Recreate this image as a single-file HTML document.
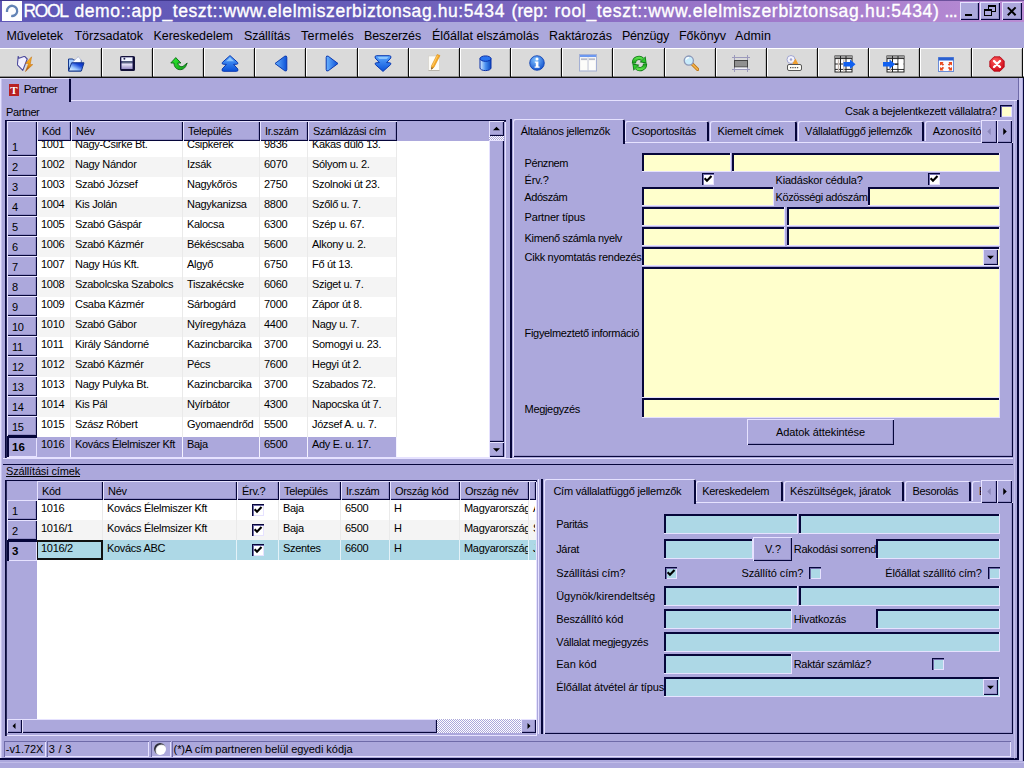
<!DOCTYPE html>
<html><head><meta charset="utf-8"><title>ROOL demo</title>
<style>
html,body{margin:0;padding:0;}
body{width:1024px;height:768px;overflow:hidden;position:relative;background:#aca8dc;font-family:"Liberation Sans",sans-serif;font-size:11px;}
body div,body svg{position:absolute;box-sizing:border-box;}
.t{font-family:"Liberation Sans",sans-serif;}
</style></head>
<body>
<div style="left:0px;top:0px;width:1024px;height:22px;background:linear-gradient(to right,#6058b8 0%,#665cb8 36%,#9874c8 68%,#ba8cd4 100%);"></div>
<div style="left:0px;top:0px;width:1024px;height:1px;background:rgba(24,16,90,.45);"></div>
<div style="left:2px;top:1px;width:20px;height:20px;background:#fdfeff;"><svg width="20" height="20" viewBox="0 0 20 20"><path d="M5 11 V9.6 A5.1 5.1 0 1 1 9.2 14.9" stroke="#6284b6" stroke-width="2.3" fill="none"/></svg></div>
<div class="t" style="top:-0.36px;font-size:17.5px;line-height:23px;letter-spacing:-1.402px;color:#fff;white-space:pre;left:23.5px;-webkit-text-stroke:0.35px #fff;">ROOL</div>
<div class="t" style="top:-0.36px;font-size:17.5px;line-height:23px;letter-spacing:0.578px;color:#fff;white-space:pre;left:74.5px;-webkit-text-stroke:0.35px #fff;">demo::app_teszt::www.elelmiszerbiztonsag.hu:5434</div>
<div class="t" style="top:-0.36px;font-size:17.5px;line-height:23px;letter-spacing:0.103px;color:#fff;white-space:pre;left:511.5px;-webkit-text-stroke:0.35px #fff;">(rep:</div>
<div class="t" style="top:-0.36px;font-size:17.5px;line-height:23px;letter-spacing:0.681px;color:#fff;white-space:pre;left:554.5px;-webkit-text-stroke:0.35px #fff;">rool_teszt::www.elelmiszerbiztonsag.hu:5434)</div>
<div class="t" style="top:-0.36px;font-size:17.5px;line-height:23px;letter-spacing:-0.698px;color:#fff;white-space:pre;left:944.5px;-webkit-text-stroke:0.35px #fff;">...</div>
<div style="left:960px;top:2px;width:19px;height:18px;background:#aca8dc;box-shadow:inset 1px 1px 0 #e6e2ff,inset -1px -1px 0 #06063a,inset -2px -2px 0 #6e6aa866;"></div>
<div style="left:980px;top:2px;width:20px;height:18px;background:#aca8dc;box-shadow:inset 1px 1px 0 #e6e2ff,inset -1px -1px 0 #06063a,inset -2px -2px 0 #6e6aa866;"></div>
<div style="left:1002px;top:2px;width:20px;height:18px;background:#aca8dc;box-shadow:inset 1px 1px 0 #e6e2ff,inset -1px -1px 0 #06063a,inset -2px -2px 0 #6e6aa866;"></div>
<div style="left:965px;top:14px;width:7px;height:2px;background:#000;"></div>
<div style="left:988px;top:5px;width:8px;height:7px;border:1px solid #000;border-top-width:2px;"></div>
<div style="left:984px;top:9px;width:8px;height:7px;border:1px solid #000;border-top-width:2px;background:#aca8dc;"></div>
<svg class="ov" style="left:1006px;top:5px" width="12" height="12"><path d="M1.8 2.4 L9.6 10.2 M9.6 2.4 L1.8 10.2" stroke="#000" stroke-width="2"/></svg>
<div class="t" style="top:27.97px;font-size:12.5px;line-height:16px;letter-spacing:-0.054px;color:#000;white-space:pre;left:6.5px;">Műveletek</div>
<div class="t" style="top:27.97px;font-size:12.5px;line-height:16px;letter-spacing:-0.026px;color:#000;white-space:pre;left:74.5px;">Törzsadatok</div>
<div class="t" style="top:27.97px;font-size:12.5px;line-height:16px;letter-spacing:-0.034px;color:#000;white-space:pre;left:153.5px;">Kereskedelem</div>
<div class="t" style="top:27.97px;font-size:12.5px;line-height:16px;letter-spacing:-0.139px;color:#000;white-space:pre;left:244px;">Szállítás</div>
<div class="t" style="top:27.97px;font-size:12.5px;line-height:16px;letter-spacing:0.285px;color:#000;white-space:pre;left:301px;">Termelés</div>
<div class="t" style="top:27.97px;font-size:12.5px;line-height:16px;letter-spacing:-0.151px;color:#000;white-space:pre;left:364px;">Beszerzés</div>
<div class="t" style="top:27.97px;font-size:12.5px;line-height:16px;letter-spacing:0.000px;color:#000;white-space:pre;left:432px;">Élőállat elszámolás</div>
<div class="t" style="top:27.97px;font-size:12.5px;line-height:16px;letter-spacing:-0.023px;color:#000;white-space:pre;left:549px;">Raktározás</div>
<div class="t" style="top:27.97px;font-size:12.5px;line-height:16px;letter-spacing:-0.237px;color:#000;white-space:pre;left:622px;">Pénzügy</div>
<div class="t" style="top:27.97px;font-size:12.5px;line-height:16px;letter-spacing:-0.036px;color:#000;white-space:pre;left:679px;">Főkönyv</div>
<div class="t" style="top:27.97px;font-size:12.5px;line-height:16px;letter-spacing:0.113px;color:#000;white-space:pre;left:735px;">Admin</div>
<div style="left:0px;top:48px;width:1024px;height:30px;background:#dadada;"></div>
<div style="left:0px;top:48px;width:1024px;height:1px;background:#fff;"></div>
<div style="left:0px;top:77px;width:1024px;height:1px;background:#101010;"></div>
<div style="left:0px;top:76px;width:1024px;height:1px;background:#8c8c8c;"></div>
<div style="left:50px;top:48px;width:1px;height:29px;background:#0c0c0c;"></div>
<div style="left:49px;top:49px;width:1px;height:27px;background:#9a9a9a;opacity:.5;"></div>
<div style="left:51px;top:49px;width:1px;height:27px;background:#fff;"></div>
<div style="left:101px;top:48px;width:1px;height:29px;background:#0c0c0c;"></div>
<div style="left:100px;top:49px;width:1px;height:27px;background:#9a9a9a;opacity:.5;"></div>
<div style="left:102px;top:49px;width:1px;height:27px;background:#fff;"></div>
<div style="left:152px;top:48px;width:1px;height:29px;background:#0c0c0c;"></div>
<div style="left:151px;top:49px;width:1px;height:27px;background:#9a9a9a;opacity:.5;"></div>
<div style="left:153px;top:49px;width:1px;height:27px;background:#fff;"></div>
<div style="left:203px;top:48px;width:1px;height:29px;background:#0c0c0c;"></div>
<div style="left:202px;top:49px;width:1px;height:27px;background:#9a9a9a;opacity:.5;"></div>
<div style="left:204px;top:49px;width:1px;height:27px;background:#fff;"></div>
<div style="left:254px;top:48px;width:1px;height:29px;background:#0c0c0c;"></div>
<div style="left:253px;top:49px;width:1px;height:27px;background:#9a9a9a;opacity:.5;"></div>
<div style="left:255px;top:49px;width:1px;height:27px;background:#fff;"></div>
<div style="left:305px;top:48px;width:1px;height:29px;background:#0c0c0c;"></div>
<div style="left:304px;top:49px;width:1px;height:27px;background:#9a9a9a;opacity:.5;"></div>
<div style="left:306px;top:49px;width:1px;height:27px;background:#fff;"></div>
<div style="left:357px;top:48px;width:1px;height:29px;background:#0c0c0c;"></div>
<div style="left:356px;top:49px;width:1px;height:27px;background:#9a9a9a;opacity:.5;"></div>
<div style="left:358px;top:49px;width:1px;height:27px;background:#fff;"></div>
<div style="left:408px;top:48px;width:1px;height:29px;background:#0c0c0c;"></div>
<div style="left:407px;top:49px;width:1px;height:27px;background:#9a9a9a;opacity:.5;"></div>
<div style="left:409px;top:49px;width:1px;height:27px;background:#fff;"></div>
<div style="left:459px;top:48px;width:1px;height:29px;background:#0c0c0c;"></div>
<div style="left:458px;top:49px;width:1px;height:27px;background:#9a9a9a;opacity:.5;"></div>
<div style="left:460px;top:49px;width:1px;height:27px;background:#fff;"></div>
<div style="left:510px;top:48px;width:1px;height:29px;background:#0c0c0c;"></div>
<div style="left:509px;top:49px;width:1px;height:27px;background:#9a9a9a;opacity:.5;"></div>
<div style="left:511px;top:49px;width:1px;height:27px;background:#fff;"></div>
<div style="left:561px;top:48px;width:1px;height:29px;background:#0c0c0c;"></div>
<div style="left:560px;top:49px;width:1px;height:27px;background:#9a9a9a;opacity:.5;"></div>
<div style="left:562px;top:49px;width:1px;height:27px;background:#fff;"></div>
<div style="left:612px;top:48px;width:1px;height:29px;background:#0c0c0c;"></div>
<div style="left:611px;top:49px;width:1px;height:27px;background:#9a9a9a;opacity:.5;"></div>
<div style="left:613px;top:49px;width:1px;height:27px;background:#fff;"></div>
<div style="left:664px;top:48px;width:1px;height:29px;background:#0c0c0c;"></div>
<div style="left:663px;top:49px;width:1px;height:27px;background:#9a9a9a;opacity:.5;"></div>
<div style="left:665px;top:49px;width:1px;height:27px;background:#fff;"></div>
<div style="left:715px;top:48px;width:1px;height:29px;background:#0c0c0c;"></div>
<div style="left:714px;top:49px;width:1px;height:27px;background:#9a9a9a;opacity:.5;"></div>
<div style="left:716px;top:49px;width:1px;height:27px;background:#fff;"></div>
<div style="left:766px;top:48px;width:1px;height:29px;background:#0c0c0c;"></div>
<div style="left:765px;top:49px;width:1px;height:27px;background:#9a9a9a;opacity:.5;"></div>
<div style="left:767px;top:49px;width:1px;height:27px;background:#fff;"></div>
<div style="left:817px;top:48px;width:1px;height:29px;background:#0c0c0c;"></div>
<div style="left:816px;top:49px;width:1px;height:27px;background:#9a9a9a;opacity:.5;"></div>
<div style="left:818px;top:49px;width:1px;height:27px;background:#fff;"></div>
<div style="left:868px;top:48px;width:1px;height:29px;background:#0c0c0c;"></div>
<div style="left:867px;top:49px;width:1px;height:27px;background:#9a9a9a;opacity:.5;"></div>
<div style="left:869px;top:49px;width:1px;height:27px;background:#fff;"></div>
<div style="left:919px;top:48px;width:1px;height:29px;background:#0c0c0c;"></div>
<div style="left:918px;top:49px;width:1px;height:27px;background:#9a9a9a;opacity:.5;"></div>
<div style="left:920px;top:49px;width:1px;height:27px;background:#fff;"></div>
<div style="left:971px;top:48px;width:1px;height:29px;background:#0c0c0c;"></div>
<div style="left:970px;top:49px;width:1px;height:27px;background:#9a9a9a;opacity:.5;"></div>
<div style="left:972px;top:49px;width:1px;height:27px;background:#fff;"></div>
<div style="left:1022px;top:48px;width:1px;height:29px;background:#0c0c0c;"></div>
<div style="left:1021px;top:49px;width:1px;height:27px;background:#9a9a9a;opacity:.5;"></div>
<div style="left:1023px;top:49px;width:1px;height:27px;background:#fff;"></div>
<svg width="0" height="0" style="left:0;top:0"><defs>
<linearGradient id="gb" x1="0" y1="0" x2="0" y2="1"><stop offset="0" stop-color="#5aa8ff"/><stop offset="1" stop-color="#0a50d8"/></linearGradient>
<linearGradient id="gbh" x1="0" y1="0" x2="1" y2="0"><stop offset="0" stop-color="#6ab4ff"/><stop offset="1" stop-color="#0a50d8"/></linearGradient>
<linearGradient id="gg" x1="0" y1="0" x2="0" y2="1"><stop offset="0" stop-color="#58e048"/><stop offset="1" stop-color="#109018"/></linearGradient>
<linearGradient id="gf" x1="0" y1="0" x2="0" y2="1"><stop offset="0" stop-color="#5a5890"/><stop offset="1" stop-color="#c8c4e8"/></linearGradient>
<radialGradient id="gi" cx="0.4" cy="0.3" r="0.8"><stop offset="0" stop-color="#7ec0ff"/><stop offset="1" stop-color="#0848c8"/></radialGradient>
<radialGradient id="gr" cx="0.4" cy="0.3" r="0.8"><stop offset="0" stop-color="#ff5a5a"/><stop offset="1" stop-color="#c80010"/></radialGradient>
<linearGradient id="gc" x1="0" y1="0" x2="1" y2="0"><stop offset="0" stop-color="#d8ecff"/><stop offset="0.5" stop-color="#4a90f0"/><stop offset="1" stop-color="#0a48c0"/></linearGradient>
</defs></svg>
<svg style="left:17.2px;top:55.5px" width="17" height="16" viewBox="0 0 17 16"><defs><linearGradient id="gbolt" x1="0" y1="0" x2="0" y2="1"><stop offset="0" stop-color="#f8b424"/><stop offset=".55" stop-color="#f09a14"/><stop offset="1" stop-color="#8a3810"/></linearGradient></defs><path d="M1.2 .4 L2 2.2 L7.6 .3 L10.2 3 L5.8 14.4 L.4 8.8 Z" fill="#f2f0ff" stroke="#4c4a9c" stroke-width="1.1" stroke-linejoin="round"/><path d="M14.6 .8 L8.4 7.4 L11.6 7.4 L8.4 15.6 L15.8 8.6 L13.2 8.4 Z" fill="url(#gbolt)" stroke="#c06a10" stroke-width=".5"/></svg>
<svg style="left:67.9px;top:55.5px" width="17" height="16" viewBox="0 0 17 16"><defs><linearGradient id="gfold" x1="0" y1="1" x2="1" y2="0"><stop offset="0" stop-color="#f4fcff"/><stop offset=".35" stop-color="#9cc8ff"/><stop offset=".7" stop-color="#1848d8"/><stop offset="1" stop-color="#0828b0"/></linearGradient></defs><path d="M.5 3 H4.8 L5.8 4.2 H13 V15 H.5 Z" fill="#a4ccff" stroke="#16388c" stroke-width="1"/><path d="M4.2 6.5 L10.2 .8 L13.2 4 L12.6 6.8 Z" fill="#fafcff" stroke="#6a78b8" stroke-width=".6" stroke-dasharray="1 .6"/><path d="M.6 15 L3.6 6.8 H16 L13.4 15 Z" fill="url(#gfold)" stroke="#16388c" stroke-width="1" stroke-linejoin="round"/></svg>
<svg style="left:120.0px;top:56.0px" width="15" height="15" viewBox="0 0 15 15"><defs><linearGradient id="glab" x1="0" y1="0" x2="0" y2="1"><stop offset="0" stop-color="#f4f2ff"/><stop offset="1" stop-color="#968cc4"/></linearGradient></defs><rect x=".5" y=".5" width="14" height="14" rx=".8" fill="#3a3870" stroke="#14123c" stroke-width="1"/><rect x="13" y="1" width="1.6" height="13.4" fill="#100e34"/><rect x="1" y="13" width="13" height="1.6" fill="#100e34"/><rect x="1.4" y="1.4" width="11" height="3.6" fill="#f2f6ff"/><circle cx="4.4" cy="2.8" r="1" fill="#2a2858"/><rect x="2.2" y="5.4" width="10" height="1.6" fill="#5c6a84"/><rect x="1.6" y="7.4" width="10.8" height="5.6" fill="url(#glab)"/></svg>
<svg style="left:170.4px;top:55.5px" width="18" height="16" viewBox="0 0 18 16"><defs><linearGradient id="gund" x1="0" y1="0" x2="1" y2="1"><stop offset="0" stop-color="#30f030"/><stop offset="1" stop-color="#10a018"/></linearGradient></defs><path d="M5.75 1.6 L10.9 7 L7.8 7 C8 9.4 10.4 11.3 13 10.4 L17.2 7 L15.6 10.6 C13.4 14.4 8 14.6 5.5 11.6 C4.3 10.1 4 8.6 4 7 L.8 7 Z" fill="url(#gund)" stroke="#086414" stroke-width=".9" stroke-linejoin="round"/></svg>
<svg style="left:220.8px;top:54.5px" width="18" height="17" viewBox="0 0 18 17"><path d="M9 .6 L16.6 7.4 Q17.6 9 15.8 9.2 L12.6 9.4 L16.8 14 Q17.6 16.3 15.4 16.3 H2.6 Q.4 16.3 1.2 14 L5.4 9.4 L2.2 9.2 Q.4 9 1.4 7.4 Z" fill="url(#gb)" stroke="#0a38b0" stroke-width="1" stroke-linejoin="round"/><path d="M9 2.4 L13 6.2 H5 Z" fill="#b4e0ff" opacity=".65"/></svg>
<svg style="left:274.0px;top:55.0px" width="14" height="17" viewBox="0 0 14 17"><path d="M1 8.5 L10.8 1.2 Q12.8 .4 12.8 2.4 V14.6 Q12.8 16.6 10.8 15.8 Z" fill="url(#gbh)" stroke="#0a38b0" stroke-width="1" stroke-linejoin="round"/></svg>
<svg style="left:325.2px;top:55.0px" width="14" height="17" viewBox="0 0 14 17"><path d="M13 8.5 L3.2 1.2 Q1.2 .4 1.2 2.4 V14.6 Q1.2 16.6 3.2 15.8 Z" fill="url(#gbh)" stroke="#0a38b0" stroke-width="1" stroke-linejoin="round"/></svg>
<svg style="left:374.3px;top:55.0px" width="18" height="17" viewBox="0 0 18 17"><path d="M9 16.4 L1.4 9.6 Q.4 8 2.2 7.8 L5.4 7.6 L1.2 3 Q.4 .7 2.6 .7 H15.4 Q17.6 .7 16.8 3 L12.6 7.6 L15.8 7.8 Q17.6 8 16.6 9.6 Z" fill="url(#gb)" stroke="#0a38b0" stroke-width="1" stroke-linejoin="round"/><path d="M3.4 1.8 H14.6 L12.8 4 H5.2 Z" fill="#b4e0ff" opacity=".6"/></svg>
<svg style="left:428.0px;top:53.9px" width="13" height="17" viewBox="0 0 13 17"><path d="M.5 2 H11.5 V16.5 H.5 Z" fill="#fdfcf8" stroke="#d0ccc4" stroke-width=".6"/><path d="M.5 16.5 H11.5" stroke="#b8b4ac" stroke-width="1"/><path d="M9.2 .4 L12 1.6 L6 13.2 L3.4 15.4 L3.4 12 Z" fill="#f6a824" stroke="#d48810" stroke-width=".5"/><path d="M9.6 1.6 L4.4 12.2" stroke="#ffd070" stroke-width=".9"/><path d="M3.4 15.4 L3.45 13.2 L5 14 Z" fill="#5a4a38"/></svg>
<svg style="left:479.1px;top:54.8px" width="13" height="17" viewBox="0 0 13 17"><path d="M1 3.5 V13 A5.5 2.6 0 0 0 12 13 V3.5 Z" fill="url(#gc)" stroke="#0a30a8" stroke-width="1"/><ellipse cx="6.5" cy="3.6" rx="5.5" ry="2.7" fill="#2a74f0" stroke="#0a30a8" stroke-width="1"/></svg>
<svg style="left:528.8px;top:54.8px" width="16" height="16" viewBox="0 0 16 16"><circle cx="8" cy="8" r="7.3" fill="url(#gi)" stroke="#0a3cb0" stroke-width=".8"/><circle cx="8" cy="4" r="1.5" fill="#fff"/><path d="M5.8 6.4 H9.4 V11.4 H10.6 V12.8 H5.6 V11.4 H6.8 V7.8 H5.8 Z" fill="#fff"/></svg>
<svg style="left:579.0px;top:53.7px" width="18" height="18" viewBox="0 0 18 18"><rect x=".5" y=".5" width="17" height="16.5" fill="#f4f4f4" stroke="#a4b0d4" stroke-width="1"/><rect x="1" y="1" width="16" height="2" fill="#6c98f0"/><rect x="2" y="4.4" width="6" height="1.5" fill="#b0b4c4"/><rect x="10" y="4.4" width="6" height="1.5" fill="#b0b4c4"/><rect x="8.6" y="3.4" width=".9" height="13.4" fill="#c4c8d8"/><rect x="2" y="7" width="6" height="9" fill="#fcfcfa"/><rect x="10" y="7" width="6" height="9" fill="#fcfcfa"/></svg>
<svg style="left:630.6px;top:54.5px" width="17" height="17" viewBox="0 0 17 17"><g><path d="M3 8.4 A5 5 0 0 1 11.4 4.3" stroke="#0a7412" stroke-width="4.2" fill="none"/><polygon points="14.6,1.2 8.6,7.2 15.6,8.6" fill="#0a7412"/><path d="M3 8.4 A5 5 0 0 1 11.4 4.3" stroke="url(#gg)" stroke-width="2.8" fill="none"/><polygon points="14,2.6 10.2,6.6 14.8,7.6" fill="#30c830"/></g><g transform="rotate(180 8.5 8.5)"><path d="M3 8.4 A5 5 0 0 1 11.4 4.3" stroke="#0a7412" stroke-width="4.2" fill="none"/><polygon points="14.6,1.2 8.6,7.2 15.6,8.6" fill="#0a7412"/><path d="M3 8.4 A5 5 0 0 1 11.4 4.3" stroke="url(#gg)" stroke-width="2.8" fill="none"/><polygon points="14,2.6 10.2,6.6 14.8,7.6" fill="#30c830"/></g></svg>
<svg style="left:683.3px;top:54.7px" width="16" height="16" viewBox="0 0 16 16"><path d="M8.8 8.6 L14.6 14.4" stroke="#c07818" stroke-width="3.4" stroke-linecap="round"/><path d="M9.4 9.2 L14.4 14.2" stroke="#f6b64a" stroke-width="1.6" stroke-linecap="round"/><circle cx="5.8" cy="5.6" r="4.6" fill="#c8ecfc" stroke="#8c98b8" stroke-width="1.3"/><path d="M3 4.6 A3 3 0 0 1 6 2.6" stroke="#fff" stroke-width="1.2" fill="none"/></svg>
<svg style="left:732.4px;top:55.0px" width="18" height="17" viewBox="0 0 18 17"><path d="M2.5 0 V17 M15.5 0 V17 M0 2.5 H18 M0 14.5 H18" stroke="#9c9abc" stroke-width="1"/><rect x="2.5" y="5.5" width="13" height="6.5" fill="#909090" stroke="#444" stroke-width="1"/><rect x="3" y="12.5" width="12" height="1.5" fill="#f0f0f8"/></svg>
<svg style="left:784.6px;top:55.0px" width="18" height="17" viewBox="0 0 18 17"><circle cx="6" cy="4.5" r="4" fill="#f4f4fc" stroke="#a0a4d0" stroke-width="1"/><circle cx="6" cy="4.5" r="1.2" fill="#a0a4d0"/><path d="M7 9.5 L10.5 3.5 L13.5 9.5 Z" fill="#f0a030"/><rect x="2.5" y="9.5" width="14" height="6" rx="1.5" fill="#fdfdf8" stroke="#555" stroke-width="1"/><path d="M5 12.6 H14" stroke="#555" stroke-width="1.4" stroke-dasharray="1.3 1"/></svg>
<svg style="left:833.8px;top:54.5px" width="22" height="18" viewBox="0 0 22 18"><rect x="1" y="1" width="17" height="16" fill="#fff" stroke="#222" stroke-width="1"/><rect x="1" y="1" width="17" height="2" fill="#999"/><path d="M1 3.6 H18 M1 9 H18 M1 14.4 H18" stroke="#222" stroke-width="1"/><path d="M6.5 1 V17 M12 1 V17" stroke="#222" stroke-width="1"/><path d="M4.5 4.5 V16.5 M9.8 4.5 V16.5" stroke="#c8bcb4" stroke-width="1.4"/><path d="M9.5 7 H16 V4.5 L21.5 9.3 L16 14 V11.5 H9.5 Z" fill="#1060f0"/></svg>
<svg style="left:882.9px;top:54.5px" width="22" height="18" viewBox="0 0 22 18"><g transform="translate(3,0)"><rect x="1" y="1" width="17" height="16" fill="#fff" stroke="#222" stroke-width="1"/><rect x="1" y="1" width="17" height="2" fill="#999"/><path d="M1 3.6 H18 M1 9 H18 M1 14.4 H18" stroke="#222" stroke-width="1"/><path d="M6.5 1 V17 M12 1 V17" stroke="#222" stroke-width="1"/><path d="M4.5 4.5 V16.5" stroke="#c8bcb4" stroke-width="1.4"/><rect x="12.6" y="4.4" width="4.8" height="9.4" fill="#fff"/></g><path d="M0 7 H6.5 V4.5 L12 9.3 L6.5 14 V11.5 H0 Z" fill="#1060f0"/><path d="M12 9.3 H15" stroke="#222" stroke-width="1.2"/></svg>
<svg style="left:938.1px;top:56.5px" width="16" height="15" viewBox="0 0 16 15"><rect x=".5" y=".5" width="15" height="14" fill="#fbfbff" stroke="#6a8cd8" stroke-width="1"/><rect x=".5" y=".5" width="15" height="3" fill="#2a60d0"/><path d="M2 5 H5.5 L4.6 6.2 L6.2 7.6 L4.8 8.8 L3.4 7.4 L2 8.4 Z" fill="#e84a20"/><path d="M14 5 H10.5 L11.4 6.2 L9.8 7.6 L11.2 8.8 L12.6 7.4 L14 8.4 Z" fill="#e84a20"/><path d="M2 13.5 H5.5 L4.6 12.3 L6.2 10.9 L4.8 9.7 L3.4 11.1 L2 10.1 Z" fill="#e84a20"/><path d="M14 13.5 H10.5 L11.4 12.3 L9.8 10.9 L11.2 9.7 L12.6 11.1 L14 10.1 Z" fill="#e84a20"/></svg>
<svg style="left:989.2px;top:55.5px" width="16" height="16" viewBox="0 0 16 16"><path d="M5 .8 H11 L15.2 5 V11 L11 15.2 H5 L.8 11 V5 Z" fill="url(#gr)" stroke="#b00010" stroke-width=".8"/><path d="M5 5 L11 11 M11 5 L5 11" stroke="#fff" stroke-width="2.4" stroke-linecap="round"/></svg>
<div style="left:0px;top:78px;width:1px;height:680px;background:#e6e2ff;"></div>
<div style="left:1px;top:78px;width:1px;height:680px;background:#e6e2ff;opacity:.45;"></div>
<div style="left:70px;top:100px;width:947px;height:1px;background:#e6e2ff;"></div>
<div style="left:69px;top:79px;width:2px;height:23px;background:#06063a;"></div>
<div style="left:0px;top:78px;width:69px;height:1px;background:#e6e2ff;"></div>
<div style="left:9px;top:83.5px;width:9.5px;height:12px;background:#b82222;"></div>
<div class="t" style="top:82.79px;font-size:11px;line-height:14px;letter-spacing:0.000px;color:#fff;white-space:pre;font-weight:bold;left:10.2px;font-family:'Liberation Serif',serif;">T</div>
<div class="t" style="top:81.52px;font-size:11.5px;line-height:15px;letter-spacing:-0.603px;color:#000;white-space:pre;left:23.75px;">Partner</div>
<div class="t" style="top:105.19px;font-size:11px;line-height:14px;letter-spacing:-0.383px;color:#000;white-space:pre;left:6px;">Partner</div>
<div style="left:5px;top:120px;width:501px;height:338px;background:#aca8dc;box-shadow:inset 1px 1px 0 #06063a,inset 2px 2px 0 #06063acc,inset -1px -1px 0 #e6e2ff;"></div>
<div style="left:37px;top:141px;width:452px;height:316px;background:#fff;"></div>
<div class="t" style="top:137.19px;font-size:11px;line-height:14px;letter-spacing:-0.300px;color:#000;white-space:pre;left:41px;">1001</div>
<div class="t" style="top:137.19px;font-size:11px;line-height:14px;letter-spacing:-0.300px;color:#000;white-space:pre;left:75px;">Nagy-Csirke Bt.</div>
<div class="t" style="top:137.19px;font-size:11px;line-height:14px;letter-spacing:-0.300px;color:#000;white-space:pre;left:187px;">Csipkerek</div>
<div class="t" style="top:137.19px;font-size:11px;line-height:14px;letter-spacing:-0.300px;color:#000;white-space:pre;left:264px;">9836</div>
<div class="t" style="top:137.19px;font-size:11px;line-height:14px;letter-spacing:-0.300px;color:#000;white-space:pre;left:312px;">Kakas dűlő 13.</div>
<div style="left:37px;top:157px;width:360px;height:20px;background:#f4f4f4;"></div>
<div class="t" style="top:157.19px;font-size:11px;line-height:14px;letter-spacing:-0.300px;color:#000;white-space:pre;left:41px;">1002</div>
<div class="t" style="top:157.19px;font-size:11px;line-height:14px;letter-spacing:-0.300px;color:#000;white-space:pre;left:75px;">Nagy Nándor</div>
<div class="t" style="top:157.19px;font-size:11px;line-height:14px;letter-spacing:-0.300px;color:#000;white-space:pre;left:187px;">Izsák</div>
<div class="t" style="top:157.19px;font-size:11px;line-height:14px;letter-spacing:-0.300px;color:#000;white-space:pre;left:264px;">6070</div>
<div class="t" style="top:157.19px;font-size:11px;line-height:14px;letter-spacing:-0.300px;color:#000;white-space:pre;left:312px;">Sólyom u. 2.</div>
<div class="t" style="top:177.19px;font-size:11px;line-height:14px;letter-spacing:-0.300px;color:#000;white-space:pre;left:41px;">1003</div>
<div class="t" style="top:177.19px;font-size:11px;line-height:14px;letter-spacing:-0.300px;color:#000;white-space:pre;left:75px;">Szabó József</div>
<div class="t" style="top:177.19px;font-size:11px;line-height:14px;letter-spacing:-0.300px;color:#000;white-space:pre;left:187px;">Nagykőrös</div>
<div class="t" style="top:177.19px;font-size:11px;line-height:14px;letter-spacing:-0.300px;color:#000;white-space:pre;left:264px;">2750</div>
<div class="t" style="top:177.19px;font-size:11px;line-height:14px;letter-spacing:-0.300px;color:#000;white-space:pre;left:312px;">Szolnoki út 23.</div>
<div style="left:37px;top:197px;width:360px;height:20px;background:#f4f4f4;"></div>
<div class="t" style="top:197.19px;font-size:11px;line-height:14px;letter-spacing:-0.300px;color:#000;white-space:pre;left:41px;">1004</div>
<div class="t" style="top:197.19px;font-size:11px;line-height:14px;letter-spacing:-0.300px;color:#000;white-space:pre;left:75px;">Kis Jolán</div>
<div class="t" style="top:197.19px;font-size:11px;line-height:14px;letter-spacing:-0.300px;color:#000;white-space:pre;left:187px;">Nagykanizsa</div>
<div class="t" style="top:197.19px;font-size:11px;line-height:14px;letter-spacing:-0.300px;color:#000;white-space:pre;left:264px;">8800</div>
<div class="t" style="top:197.19px;font-size:11px;line-height:14px;letter-spacing:-0.300px;color:#000;white-space:pre;left:312px;">Szőlő u. 7.</div>
<div class="t" style="top:217.19px;font-size:11px;line-height:14px;letter-spacing:-0.300px;color:#000;white-space:pre;left:41px;">1005</div>
<div class="t" style="top:217.19px;font-size:11px;line-height:14px;letter-spacing:-0.300px;color:#000;white-space:pre;left:75px;">Szabó Gáspár</div>
<div class="t" style="top:217.19px;font-size:11px;line-height:14px;letter-spacing:-0.300px;color:#000;white-space:pre;left:187px;">Kalocsa</div>
<div class="t" style="top:217.19px;font-size:11px;line-height:14px;letter-spacing:-0.300px;color:#000;white-space:pre;left:264px;">6300</div>
<div class="t" style="top:217.19px;font-size:11px;line-height:14px;letter-spacing:-0.300px;color:#000;white-space:pre;left:312px;">Szép u. 67.</div>
<div style="left:37px;top:237px;width:360px;height:20px;background:#f4f4f4;"></div>
<div class="t" style="top:237.19px;font-size:11px;line-height:14px;letter-spacing:-0.300px;color:#000;white-space:pre;left:41px;">1006</div>
<div class="t" style="top:237.19px;font-size:11px;line-height:14px;letter-spacing:-0.300px;color:#000;white-space:pre;left:75px;">Szabó Kázmér</div>
<div class="t" style="top:237.19px;font-size:11px;line-height:14px;letter-spacing:-0.300px;color:#000;white-space:pre;left:187px;">Békéscsaba</div>
<div class="t" style="top:237.19px;font-size:11px;line-height:14px;letter-spacing:-0.300px;color:#000;white-space:pre;left:264px;">5600</div>
<div class="t" style="top:237.19px;font-size:11px;line-height:14px;letter-spacing:-0.300px;color:#000;white-space:pre;left:312px;">Alkony u. 2.</div>
<div class="t" style="top:257.19px;font-size:11px;line-height:14px;letter-spacing:-0.300px;color:#000;white-space:pre;left:41px;">1007</div>
<div class="t" style="top:257.19px;font-size:11px;line-height:14px;letter-spacing:-0.300px;color:#000;white-space:pre;left:75px;">Nagy Hús Kft.</div>
<div class="t" style="top:257.19px;font-size:11px;line-height:14px;letter-spacing:-0.300px;color:#000;white-space:pre;left:187px;">Algyő</div>
<div class="t" style="top:257.19px;font-size:11px;line-height:14px;letter-spacing:-0.300px;color:#000;white-space:pre;left:264px;">6750</div>
<div class="t" style="top:257.19px;font-size:11px;line-height:14px;letter-spacing:-0.300px;color:#000;white-space:pre;left:312px;">Fő út 13.</div>
<div style="left:37px;top:277px;width:360px;height:20px;background:#f4f4f4;"></div>
<div class="t" style="top:277.19px;font-size:11px;line-height:14px;letter-spacing:-0.300px;color:#000;white-space:pre;left:41px;">1008</div>
<div class="t" style="top:277.19px;font-size:11px;line-height:14px;letter-spacing:-0.300px;color:#000;white-space:pre;left:75px;">Szabolcska Szabolcs</div>
<div class="t" style="top:277.19px;font-size:11px;line-height:14px;letter-spacing:-0.300px;color:#000;white-space:pre;left:187px;">Tiszakécske</div>
<div class="t" style="top:277.19px;font-size:11px;line-height:14px;letter-spacing:-0.300px;color:#000;white-space:pre;left:264px;">6060</div>
<div class="t" style="top:277.19px;font-size:11px;line-height:14px;letter-spacing:-0.300px;color:#000;white-space:pre;left:312px;">Sziget u. 7.</div>
<div class="t" style="top:297.19px;font-size:11px;line-height:14px;letter-spacing:-0.300px;color:#000;white-space:pre;left:41px;">1009</div>
<div class="t" style="top:297.19px;font-size:11px;line-height:14px;letter-spacing:-0.300px;color:#000;white-space:pre;left:75px;">Csaba Kázmér</div>
<div class="t" style="top:297.19px;font-size:11px;line-height:14px;letter-spacing:-0.300px;color:#000;white-space:pre;left:187px;">Sárbogárd</div>
<div class="t" style="top:297.19px;font-size:11px;line-height:14px;letter-spacing:-0.300px;color:#000;white-space:pre;left:264px;">7000</div>
<div class="t" style="top:297.19px;font-size:11px;line-height:14px;letter-spacing:-0.300px;color:#000;white-space:pre;left:312px;">Zápor út 8.</div>
<div style="left:37px;top:317px;width:360px;height:20px;background:#f4f4f4;"></div>
<div class="t" style="top:317.19px;font-size:11px;line-height:14px;letter-spacing:-0.300px;color:#000;white-space:pre;left:41px;">1010</div>
<div class="t" style="top:317.19px;font-size:11px;line-height:14px;letter-spacing:-0.300px;color:#000;white-space:pre;left:75px;">Szabó Gábor</div>
<div class="t" style="top:317.19px;font-size:11px;line-height:14px;letter-spacing:-0.300px;color:#000;white-space:pre;left:187px;">Nyíregyháza</div>
<div class="t" style="top:317.19px;font-size:11px;line-height:14px;letter-spacing:-0.300px;color:#000;white-space:pre;left:264px;">4400</div>
<div class="t" style="top:317.19px;font-size:11px;line-height:14px;letter-spacing:-0.300px;color:#000;white-space:pre;left:312px;">Nagy u. 7.</div>
<div class="t" style="top:337.19px;font-size:11px;line-height:14px;letter-spacing:-0.300px;color:#000;white-space:pre;left:41px;">1011</div>
<div class="t" style="top:337.19px;font-size:11px;line-height:14px;letter-spacing:-0.300px;color:#000;white-space:pre;left:75px;">Király Sándorné</div>
<div class="t" style="top:337.19px;font-size:11px;line-height:14px;letter-spacing:-0.300px;color:#000;white-space:pre;left:187px;">Kazincbarcika</div>
<div class="t" style="top:337.19px;font-size:11px;line-height:14px;letter-spacing:-0.300px;color:#000;white-space:pre;left:264px;">3700</div>
<div class="t" style="top:337.19px;font-size:11px;line-height:14px;letter-spacing:-0.300px;color:#000;white-space:pre;left:312px;">Somogyi u. 23.</div>
<div style="left:37px;top:357px;width:360px;height:20px;background:#f4f4f4;"></div>
<div class="t" style="top:357.19px;font-size:11px;line-height:14px;letter-spacing:-0.300px;color:#000;white-space:pre;left:41px;">1012</div>
<div class="t" style="top:357.19px;font-size:11px;line-height:14px;letter-spacing:-0.300px;color:#000;white-space:pre;left:75px;">Szabó Kázmér</div>
<div class="t" style="top:357.19px;font-size:11px;line-height:14px;letter-spacing:-0.300px;color:#000;white-space:pre;left:187px;">Pécs</div>
<div class="t" style="top:357.19px;font-size:11px;line-height:14px;letter-spacing:-0.300px;color:#000;white-space:pre;left:264px;">7600</div>
<div class="t" style="top:357.19px;font-size:11px;line-height:14px;letter-spacing:-0.300px;color:#000;white-space:pre;left:312px;">Hegyi út 2.</div>
<div class="t" style="top:377.19px;font-size:11px;line-height:14px;letter-spacing:-0.300px;color:#000;white-space:pre;left:41px;">1013</div>
<div class="t" style="top:377.19px;font-size:11px;line-height:14px;letter-spacing:-0.300px;color:#000;white-space:pre;left:75px;">Nagy Pulyka Bt.</div>
<div class="t" style="top:377.19px;font-size:11px;line-height:14px;letter-spacing:-0.300px;color:#000;white-space:pre;left:187px;">Kazincbarcika</div>
<div class="t" style="top:377.19px;font-size:11px;line-height:14px;letter-spacing:-0.300px;color:#000;white-space:pre;left:264px;">3700</div>
<div class="t" style="top:377.19px;font-size:11px;line-height:14px;letter-spacing:-0.300px;color:#000;white-space:pre;left:312px;">Szabados 72.</div>
<div style="left:37px;top:397px;width:360px;height:20px;background:#f4f4f4;"></div>
<div class="t" style="top:397.19px;font-size:11px;line-height:14px;letter-spacing:-0.300px;color:#000;white-space:pre;left:41px;">1014</div>
<div class="t" style="top:397.19px;font-size:11px;line-height:14px;letter-spacing:-0.300px;color:#000;white-space:pre;left:75px;">Kis Pál</div>
<div class="t" style="top:397.19px;font-size:11px;line-height:14px;letter-spacing:-0.300px;color:#000;white-space:pre;left:187px;">Nyírbátor</div>
<div class="t" style="top:397.19px;font-size:11px;line-height:14px;letter-spacing:-0.300px;color:#000;white-space:pre;left:264px;">4300</div>
<div class="t" style="top:397.19px;font-size:11px;line-height:14px;letter-spacing:-0.300px;color:#000;white-space:pre;left:312px;">Napocska út 7.</div>
<div class="t" style="top:417.19px;font-size:11px;line-height:14px;letter-spacing:-0.300px;color:#000;white-space:pre;left:41px;">1015</div>
<div class="t" style="top:417.19px;font-size:11px;line-height:14px;letter-spacing:-0.300px;color:#000;white-space:pre;left:75px;">Szász Róbert</div>
<div class="t" style="top:417.19px;font-size:11px;line-height:14px;letter-spacing:-0.300px;color:#000;white-space:pre;left:187px;">Gyomaendrőd</div>
<div class="t" style="top:417.19px;font-size:11px;line-height:14px;letter-spacing:-0.300px;color:#000;white-space:pre;left:264px;">5500</div>
<div class="t" style="top:417.19px;font-size:11px;line-height:14px;letter-spacing:-0.300px;color:#000;white-space:pre;left:312px;">József A. u. 7.</div>
<div style="left:37px;top:437px;width:360px;height:20px;background:#aca8dc;"></div>
<div class="t" style="top:437.19px;font-size:11px;line-height:14px;letter-spacing:-0.300px;color:#000;white-space:pre;left:41px;">1016</div>
<div class="t" style="top:437.19px;font-size:11px;line-height:14px;letter-spacing:-0.300px;color:#000;white-space:pre;left:75px;">Kovács Élelmiszer Kft</div>
<div class="t" style="top:437.19px;font-size:11px;line-height:14px;letter-spacing:-0.300px;color:#000;white-space:pre;left:187px;">Baja</div>
<div class="t" style="top:437.19px;font-size:11px;line-height:14px;letter-spacing:-0.300px;color:#000;white-space:pre;left:264px;">6500</div>
<div class="t" style="top:437.19px;font-size:11px;line-height:14px;letter-spacing:-0.300px;color:#000;white-space:pre;left:312px;">Ady E. u. 17.</div>
<div style="left:70px;top:141px;width:1px;height:296px;background:#eaeaea;"></div>
<div style="left:70px;top:437px;width:1px;height:20px;background:#f4f2ff;"></div>
<div style="left:182px;top:141px;width:1px;height:296px;background:#eaeaea;"></div>
<div style="left:182px;top:437px;width:1px;height:20px;background:#f4f2ff;"></div>
<div style="left:259px;top:141px;width:1px;height:296px;background:#eaeaea;"></div>
<div style="left:259px;top:437px;width:1px;height:20px;background:#f4f2ff;"></div>
<div style="left:307px;top:141px;width:1px;height:296px;background:#eaeaea;"></div>
<div style="left:307px;top:437px;width:1px;height:20px;background:#f4f2ff;"></div>
<div style="left:396px;top:141px;width:1px;height:296px;background:#eaeaea;"></div>
<div style="left:396px;top:437px;width:1px;height:20px;background:#f4f2ff;"></div>
<div style="left:7px;top:121px;width:482px;height:20px;background:#aca8dc;"></div>
<div style="left:37px;top:121px;width:34px;height:20px;background:#aca8dc;box-shadow:inset 1px 1px 0 #e6e2ff,inset -1px -1px 0 #06063a,inset -2px -2px 0 #6e6aa866;"></div>
<div class="t" style="top:124.19px;font-size:11px;line-height:14px;letter-spacing:-0.300px;color:#000;white-space:pre;left:42px;">Kód</div>
<div style="left:71px;top:121px;width:112px;height:20px;background:#aca8dc;box-shadow:inset 1px 1px 0 #e6e2ff,inset -1px -1px 0 #06063a,inset -2px -2px 0 #6e6aa866;"></div>
<div class="t" style="top:124.19px;font-size:11px;line-height:14px;letter-spacing:-0.300px;color:#000;white-space:pre;left:76px;">Név</div>
<div style="left:183px;top:121px;width:77px;height:20px;background:#aca8dc;box-shadow:inset 1px 1px 0 #e6e2ff,inset -1px -1px 0 #06063a,inset -2px -2px 0 #6e6aa866;"></div>
<div class="t" style="top:124.19px;font-size:11px;line-height:14px;letter-spacing:-0.300px;color:#000;white-space:pre;left:188px;">Település</div>
<div style="left:260px;top:121px;width:48px;height:20px;background:#aca8dc;box-shadow:inset 1px 1px 0 #e6e2ff,inset -1px -1px 0 #06063a,inset -2px -2px 0 #6e6aa866;"></div>
<div class="t" style="top:124.19px;font-size:11px;line-height:14px;letter-spacing:-0.300px;color:#000;white-space:pre;left:265px;">Ir.szám</div>
<div style="left:308px;top:121px;width:89px;height:20px;background:#aca8dc;box-shadow:inset 1px 1px 0 #e6e2ff,inset -1px -1px 0 #06063a,inset -2px -2px 0 #6e6aa866;"></div>
<div class="t" style="top:124.19px;font-size:11px;line-height:14px;letter-spacing:-0.300px;color:#000;white-space:pre;left:313px;">Számlázási cím</div>
<div style="left:7px;top:121px;width:30px;height:35px;background:#aca8dc;box-shadow:inset 1px 1px 0 #e6e2ff,inset -1px -1px 0 #06063a,inset -2px -2px 0 #6e6aa866;"></div>
<div class="t" style="top:140.19px;font-size:11px;line-height:14px;letter-spacing:-0.300px;color:#000;white-space:pre;left:12px;">1</div>
<div style="left:7px;top:156px;width:30px;height:20px;background:#aca8dc;box-shadow:inset 1px 1px 0 #e6e2ff,inset -1px -1px 0 #06063a,inset -2px -2px 0 #6e6aa866;"></div>
<div class="t" style="top:160.19px;font-size:11px;line-height:14px;letter-spacing:-0.300px;color:#000;white-space:pre;left:12px;">2</div>
<div style="left:7px;top:176px;width:30px;height:20px;background:#aca8dc;box-shadow:inset 1px 1px 0 #e6e2ff,inset -1px -1px 0 #06063a,inset -2px -2px 0 #6e6aa866;"></div>
<div class="t" style="top:180.19px;font-size:11px;line-height:14px;letter-spacing:-0.300px;color:#000;white-space:pre;left:12px;">3</div>
<div style="left:7px;top:196px;width:30px;height:20px;background:#aca8dc;box-shadow:inset 1px 1px 0 #e6e2ff,inset -1px -1px 0 #06063a,inset -2px -2px 0 #6e6aa866;"></div>
<div class="t" style="top:200.19px;font-size:11px;line-height:14px;letter-spacing:-0.300px;color:#000;white-space:pre;left:12px;">4</div>
<div style="left:7px;top:216px;width:30px;height:20px;background:#aca8dc;box-shadow:inset 1px 1px 0 #e6e2ff,inset -1px -1px 0 #06063a,inset -2px -2px 0 #6e6aa866;"></div>
<div class="t" style="top:220.19px;font-size:11px;line-height:14px;letter-spacing:-0.300px;color:#000;white-space:pre;left:12px;">5</div>
<div style="left:7px;top:236px;width:30px;height:20px;background:#aca8dc;box-shadow:inset 1px 1px 0 #e6e2ff,inset -1px -1px 0 #06063a,inset -2px -2px 0 #6e6aa866;"></div>
<div class="t" style="top:240.19px;font-size:11px;line-height:14px;letter-spacing:-0.300px;color:#000;white-space:pre;left:12px;">6</div>
<div style="left:7px;top:256px;width:30px;height:20px;background:#aca8dc;box-shadow:inset 1px 1px 0 #e6e2ff,inset -1px -1px 0 #06063a,inset -2px -2px 0 #6e6aa866;"></div>
<div class="t" style="top:260.19px;font-size:11px;line-height:14px;letter-spacing:-0.300px;color:#000;white-space:pre;left:12px;">7</div>
<div style="left:7px;top:276px;width:30px;height:20px;background:#aca8dc;box-shadow:inset 1px 1px 0 #e6e2ff,inset -1px -1px 0 #06063a,inset -2px -2px 0 #6e6aa866;"></div>
<div class="t" style="top:280.19px;font-size:11px;line-height:14px;letter-spacing:-0.300px;color:#000;white-space:pre;left:12px;">8</div>
<div style="left:7px;top:296px;width:30px;height:20px;background:#aca8dc;box-shadow:inset 1px 1px 0 #e6e2ff,inset -1px -1px 0 #06063a,inset -2px -2px 0 #6e6aa866;"></div>
<div class="t" style="top:300.19px;font-size:11px;line-height:14px;letter-spacing:-0.300px;color:#000;white-space:pre;left:12px;">9</div>
<div style="left:7px;top:316px;width:30px;height:20px;background:#aca8dc;box-shadow:inset 1px 1px 0 #e6e2ff,inset -1px -1px 0 #06063a,inset -2px -2px 0 #6e6aa866;"></div>
<div class="t" style="top:320.19px;font-size:11px;line-height:14px;letter-spacing:-0.300px;color:#000;white-space:pre;left:12px;">10</div>
<div style="left:7px;top:336px;width:30px;height:20px;background:#aca8dc;box-shadow:inset 1px 1px 0 #e6e2ff,inset -1px -1px 0 #06063a,inset -2px -2px 0 #6e6aa866;"></div>
<div class="t" style="top:340.19px;font-size:11px;line-height:14px;letter-spacing:-0.300px;color:#000;white-space:pre;left:12px;">11</div>
<div style="left:7px;top:356px;width:30px;height:20px;background:#aca8dc;box-shadow:inset 1px 1px 0 #e6e2ff,inset -1px -1px 0 #06063a,inset -2px -2px 0 #6e6aa866;"></div>
<div class="t" style="top:360.19px;font-size:11px;line-height:14px;letter-spacing:-0.300px;color:#000;white-space:pre;left:12px;">12</div>
<div style="left:7px;top:376px;width:30px;height:20px;background:#aca8dc;box-shadow:inset 1px 1px 0 #e6e2ff,inset -1px -1px 0 #06063a,inset -2px -2px 0 #6e6aa866;"></div>
<div class="t" style="top:380.19px;font-size:11px;line-height:14px;letter-spacing:-0.300px;color:#000;white-space:pre;left:12px;">13</div>
<div style="left:7px;top:396px;width:30px;height:20px;background:#aca8dc;box-shadow:inset 1px 1px 0 #e6e2ff,inset -1px -1px 0 #06063a,inset -2px -2px 0 #6e6aa866;"></div>
<div class="t" style="top:400.19px;font-size:11px;line-height:14px;letter-spacing:-0.300px;color:#000;white-space:pre;left:12px;">14</div>
<div style="left:7px;top:416px;width:30px;height:20px;background:#aca8dc;box-shadow:inset 1px 1px 0 #e6e2ff,inset -1px -1px 0 #06063a,inset -2px -2px 0 #6e6aa866;"></div>
<div class="t" style="top:420.19px;font-size:11px;line-height:14px;letter-spacing:-0.300px;color:#000;white-space:pre;left:12px;">15</div>
<div style="left:7px;top:436px;width:30px;height:21px;background:#aca8dc;box-shadow:inset 2px 2px 0 #06063a,inset -1px -1px 0 #e6e2ff;"></div>
<div class="t" style="top:440.02px;font-size:11.5px;line-height:15px;letter-spacing:0.000px;color:#000;white-space:pre;font-weight:bold;left:12px;">16</div>
<div style="left:489px;top:121px;width:15px;height:336px;background:conic-gradient(#fff 25%,#aca8dc 0 50%,#fff 0 75%,#aca8dc 0) 0 0/2px 2px;"></div>
<div style="left:489px;top:121px;width:15px;height:15px;background:#aca8dc;box-shadow:inset 1px 1px 0 #e6e2ff,inset -1px -1px 0 #06063a,inset -2px -2px 0 #6e6aa866;"></div>
<svg style="left:0;top:0" width="1024" height="768" class="ov"><polygon points="493.0,130.25 500.0,130.25 496.5,126.75" fill="#000"/></svg>
<div style="left:489px;top:442px;width:15px;height:15px;background:#aca8dc;box-shadow:inset 1px 1px 0 #e6e2ff,inset -1px -1px 0 #06063a,inset -2px -2px 0 #6e6aa866;"></div>
<svg style="left:0;top:0" width="1024" height="768" class="ov"><polygon points="493.0,448.25 500.0,448.25 496.5,451.75" fill="#000"/></svg>
<div style="left:489px;top:140px;width:15px;height:302px;background:#aca8dc;box-shadow:inset 1px 1px 0 #e6e2ff,inset -1px -1px 0 #06063a,inset -2px -2px 0 #6e6aa866;"></div>
<div style="left:510px;top:119px;width:2px;height:340px;background:#06063a;"></div>
<div class="t" style="top:104.19px;font-size:11px;line-height:14px;letter-spacing:-0.193px;color:#000;white-space:pre;right:27px;">Csak a bejelentkezett vállalatra?</div>
<div style="left:1000px;top:105px;width:12px;height:12px;background:#ffffcc;box-shadow:inset 1px 1px 0 #06063a,inset 2px 2px 0 #6e6aa8,inset -1px -1px 0 #e6e2ff;"></div>
<div style="left:513px;top:142px;width:500px;height:315px;background:#aca8dc;box-shadow:inset 1px 0 0 #e6e2ff,inset -1px -1px 0 #06063a,inset -2px -2px 0 #6e6aa855;"></div>
<div style="left:513px;top:142px;width:500px;height:1px;background:#e6e2ff;"></div>
<div style="left:513px;top:119px;width:112px;height:25px;background:#aca8dc;box-shadow:inset 1px 1px 0 #e6e2ff,inset -2px 0 0 #06063a;border-radius:2px 2px 0 0;"></div>
<div class="t" style="top:123.69px;font-size:11px;line-height:14px;letter-spacing:-0.266px;color:#000;white-space:pre;left:520.8px;">Általános jellemzők</div>
<div style="left:625px;top:121px;width:84px;height:20px;background:#aca8dc;box-shadow:inset 1px 1px 0 #e6e2ff,inset -2px 0 0 #06063a;border-radius:2px 2px 0 0;"></div>
<div style="left:625px;top:121px;width:84px;height:20px;overflow:hidden;"><div class="t" style="left:6.5px;top:2.69px;font-size:11px;line-height:14px;letter-spacing:-0.260px;white-space:pre;">Csoportosítás</div></div>
<div style="left:710px;top:121px;width:87px;height:20px;background:#aca8dc;box-shadow:inset 1px 1px 0 #e6e2ff,inset -2px 0 0 #06063a;border-radius:2px 2px 0 0;"></div>
<div style="left:710px;top:121px;width:87px;height:20px;overflow:hidden;"><div class="t" style="left:7.600000000000023px;top:2.69px;font-size:11px;line-height:14px;letter-spacing:-0.237px;white-space:pre;">Kiemelt címek</div></div>
<div style="left:798px;top:121px;width:126px;height:20px;background:#aca8dc;box-shadow:inset 1px 1px 0 #e6e2ff,inset -2px 0 0 #06063a;border-radius:2px 2px 0 0;"></div>
<div style="left:798px;top:121px;width:126px;height:20px;overflow:hidden;"><div class="t" style="left:7.100000000000023px;top:2.69px;font-size:11px;line-height:14px;letter-spacing:-0.240px;white-space:pre;">Vállalatfüggő jellemzők</div></div>
<div style="left:925px;top:121px;width:56px;height:20px;background:#aca8dc;box-shadow:inset 1px 1px 0 #e6e2ff;border-radius:2px 2px 0 0;"></div>
<div style="left:925px;top:121px;width:56px;height:20px;overflow:hidden;"><div class="t" style="left:7.7000000000000455px;top:2.69px;font-size:11px;line-height:14px;letter-spacing:0.009px;white-space:pre;">Azonosító</div></div>
<div style="left:981px;top:120px;width:16px;height:23px;background:#aca8dc;box-shadow:inset 1px 1px 0 #e6e2ff,inset -1px -1px 0 #06063a,inset -2px -2px 0 #6e6aa866;"></div>
<div style="left:997px;top:120px;width:15px;height:23px;background:#aca8dc;box-shadow:inset 1px 1px 0 #e6e2ff,inset -1px -1px 0 #06063a,inset -2px -2px 0 #6e6aa866;"></div>
<svg style="left:0;top:0" width="1024" height="768" class="ov"><polygon points="990.75,128.0 990.75,135.0 987.25,131.5" fill="#8a86b8"/></svg>
<svg style="left:0;top:0" width="1024" height="768" class="ov"><polygon points="1003.25,128.0 1003.25,135.0 1006.75,131.5" fill="#000"/></svg>
<div class="t" style="top:155.69px;font-size:11px;line-height:14px;letter-spacing:-0.441px;color:#000;white-space:pre;left:524.6px;">Pénznem</div>
<div style="left:642px;top:153px;width:89px;height:19px;background:#ffffcc;box-shadow:inset -1px -1px 0 #e6e2ff,inset 2px 2px 0 #06063a;"></div>
<div style="left:732px;top:153px;width:268px;height:19px;background:#ffffcc;box-shadow:inset -1px -1px 0 #e6e2ff,inset 2px 2px 0 #06063a;"></div>
<div class="t" style="top:172.99px;font-size:11px;line-height:14px;letter-spacing:-0.172px;color:#000;white-space:pre;left:524.6px;">Érv.?</div>
<div style="left:702px;top:173px;width:12px;height:12px;background:#fff;box-shadow:inset 1px 1px 0 #06063a,inset 2px 2px 0 #6e6aa8,inset -1px -1px 0 #e6e2ff;"><svg width="12" height="12" viewBox="0 0 12 12" style="position:absolute;left:0;top:0"><path d="M2.6 5.2 L5 7.8 L9.5 3.1" stroke="#000" stroke-width="2.1" fill="none"/></svg></div>
<div class="t" style="top:172.99px;font-size:11px;line-height:14px;letter-spacing:-0.201px;color:#000;white-space:pre;left:775.5px;">Kiadáskor cédula?</div>
<div style="left:928px;top:173px;width:12px;height:12px;background:#fff;box-shadow:inset 1px 1px 0 #06063a,inset 2px 2px 0 #6e6aa8,inset -1px -1px 0 #e6e2ff;"><svg width="12" height="12" viewBox="0 0 12 12" style="position:absolute;left:0;top:0"><path d="M2.6 5.2 L5 7.8 L9.5 3.1" stroke="#000" stroke-width="2.1" fill="none"/></svg></div>
<div class="t" style="top:189.99px;font-size:11px;line-height:14px;letter-spacing:-0.380px;color:#000;white-space:pre;left:524.2px;">Adószám</div>
<div style="left:642px;top:187px;width:132px;height:19px;background:#ffffcc;box-shadow:inset -1px -1px 0 #e6e2ff,inset 2px 2px 0 #06063a;"></div>
<div class="t" style="top:189.99px;font-size:11px;line-height:14px;letter-spacing:-0.380px;color:#000;white-space:pre;left:775.5px;">Közösségi adószám</div>
<div style="left:868px;top:187px;width:132px;height:19px;background:#ffffcc;box-shadow:inset -1px -1px 0 #e6e2ff,inset 2px 2px 0 #06063a;"></div>
<div class="t" style="top:210.19px;font-size:11px;line-height:14px;letter-spacing:-0.199px;color:#000;white-space:pre;left:524.6px;">Partner típus</div>
<div style="left:642px;top:207px;width:143px;height:19px;background:#ffffcc;box-shadow:inset -1px -1px 0 #e6e2ff,inset 2px 2px 0 #06063a;"></div>
<div style="left:787px;top:207px;width:213px;height:19px;background:#ffffcc;box-shadow:inset -1px -1px 0 #e6e2ff,inset 2px 2px 0 #06063a;"></div>
<div class="t" style="top:230.59px;font-size:11px;line-height:14px;letter-spacing:-0.349px;color:#000;white-space:pre;left:524.6px;">Kimenő számla nyelv</div>
<div style="left:642px;top:227px;width:143px;height:19px;background:#ffffcc;box-shadow:inset -1px -1px 0 #e6e2ff,inset 2px 2px 0 #06063a;"></div>
<div style="left:787px;top:227px;width:213px;height:19px;background:#ffffcc;box-shadow:inset -1px -1px 0 #e6e2ff,inset 2px 2px 0 #06063a;"></div>
<div class="t" style="top:249.69px;font-size:11px;line-height:14px;letter-spacing:-0.283px;color:#000;white-space:pre;left:524.6px;">Cikk nyomtatás rendezés</div>
<div style="left:642px;top:247px;width:358px;height:19px;background:#ffffcc;box-shadow:inset -1px -1px 0 #e6e2ff,inset 2px 2px 0 #06063a;"></div>
<div style="left:983px;top:249px;width:15px;height:16px;background:#aca8dc;box-shadow:inset 1px 1px 0 #e6e2ff,inset -1px -1px 0 #06063a,inset -2px -2px 0 #6e6aa866;"></div>
<svg style="left:0;top:0" width="1024" height="768" class="ov"><polygon points="987.0,255.75 994.0,255.75 990.5,259.25" fill="#000"/></svg>
<div class="t" style="top:326.19px;font-size:11px;line-height:14px;letter-spacing:-0.324px;color:#000;white-space:pre;left:524.6px;">Figyelmeztető információ</div>
<div style="left:642px;top:267px;width:358px;height:131px;background:#ffffcc;box-shadow:inset -1px -1px 0 #e6e2ff,inset 2px 2px 0 #06063a;"></div>
<div class="t" style="top:402.19px;font-size:11px;line-height:14px;letter-spacing:-0.330px;color:#000;white-space:pre;left:524.6px;">Megjegyzés</div>
<div style="left:642px;top:398px;width:358px;height:20px;background:#ffffcc;box-shadow:inset -1px -1px 0 #e6e2ff,inset 2px 2px 0 #06063a;"></div>
<div style="left:747px;top:419px;width:147px;height:26px;background:#aca8dc;box-shadow:inset 1px 1px 0 #e6e2ff,inset -1px -1px 0 #06063a,inset -2px -2px 0 #6e6aa866;"></div>
<div class="t" style="top:425.19px;font-size:11px;line-height:14px;letter-spacing:-0.084px;color:#000;white-space:pre;left:776px;">Adatok áttekintése</div>
<div style="left:3px;top:458px;width:1010px;height:1px;background:#e6e2ff;"></div>
<div style="left:3px;top:463.5px;width:1010px;height:1.5px;background:#06063a;"></div>
<div class="t" style="top:464.19px;font-size:11px;line-height:14px;letter-spacing:-0.151px;color:#000;white-space:pre;left:6px;text-decoration:underline;">Szállítási címek</div>
<div style="left:5px;top:480px;width:532px;height:256px;background:#aca8dc;box-shadow:inset 1px 1px 0 #06063a,inset 2px 2px 0 #06063acc,inset -1px -1px 0 #e6e2ff;"></div>
<div style="left:37px;top:500px;width:499px;height:219px;background:#fff;"></div>
<div style="left:37px;top:500px;width:499px;height:20px;background:#fff;"></div>
<div style="left:37px;top:500px;width:65px;height:20px;overflow:hidden;"><div class="t" style="left:4px;top:0.7px;font-size:11px;line-height:14px;letter-spacing:-0.3px;white-space:pre;">1016</div></div>
<div style="left:103px;top:500px;width:133px;height:20px;overflow:hidden;"><div class="t" style="left:4px;top:0.7px;font-size:11px;line-height:14px;letter-spacing:-0.3px;white-space:pre;">Kovács Élelmiszer Kft</div></div>
<div style="left:252px;top:504px;width:12px;height:12px;background:#fff;box-shadow:inset 1px 1px 0 #06063a,inset 2px 2px 0 #6e6aa8,inset -1px -1px 0 #e6e2ff;"><svg width="12" height="12" viewBox="0 0 12 12" style="position:absolute;left:0;top:0"><path d="M2.6 5.2 L5 7.8 L9.5 3.1" stroke="#000" stroke-width="2.1" fill="none"/></svg></div>
<div style="left:279px;top:500px;width:61px;height:20px;overflow:hidden;"><div class="t" style="left:4px;top:0.7px;font-size:11px;line-height:14px;letter-spacing:-0.3px;white-space:pre;">Baja</div></div>
<div style="left:341px;top:500px;width:48px;height:20px;overflow:hidden;"><div class="t" style="left:4px;top:0.7px;font-size:11px;line-height:14px;letter-spacing:-0.3px;white-space:pre;">6500</div></div>
<div style="left:390px;top:500px;width:69px;height:20px;overflow:hidden;"><div class="t" style="left:4px;top:0.7px;font-size:11px;line-height:14px;letter-spacing:-0.3px;white-space:pre;">H</div></div>
<div style="left:460px;top:500px;width:68px;height:20px;overflow:hidden;"><div class="t" style="left:4px;top:0.7px;font-size:11px;line-height:14px;letter-spacing:-0.3px;white-space:pre;">Magyarország</div></div>
<div style="left:529px;top:500px;width:6px;height:20px;overflow:hidden;"><div class="t" style="left:4px;top:0.7px;font-size:11px;line-height:14px;letter-spacing:-0.3px;white-space:pre;">A</div></div>
<div style="left:37px;top:520px;width:499px;height:20px;background:#f4f4f4;"></div>
<div style="left:37px;top:520px;width:65px;height:20px;overflow:hidden;"><div class="t" style="left:4px;top:0.7px;font-size:11px;line-height:14px;letter-spacing:-0.3px;white-space:pre;">1016/1</div></div>
<div style="left:103px;top:520px;width:133px;height:20px;overflow:hidden;"><div class="t" style="left:4px;top:0.7px;font-size:11px;line-height:14px;letter-spacing:-0.3px;white-space:pre;">Kovács Élelmsizer Kft</div></div>
<div style="left:252px;top:524px;width:12px;height:12px;background:#fff;box-shadow:inset 1px 1px 0 #06063a,inset 2px 2px 0 #6e6aa8,inset -1px -1px 0 #e6e2ff;"><svg width="12" height="12" viewBox="0 0 12 12" style="position:absolute;left:0;top:0"><path d="M2.6 5.2 L5 7.8 L9.5 3.1" stroke="#000" stroke-width="2.1" fill="none"/></svg></div>
<div style="left:279px;top:520px;width:61px;height:20px;overflow:hidden;"><div class="t" style="left:4px;top:0.7px;font-size:11px;line-height:14px;letter-spacing:-0.3px;white-space:pre;">Baja</div></div>
<div style="left:341px;top:520px;width:48px;height:20px;overflow:hidden;"><div class="t" style="left:4px;top:0.7px;font-size:11px;line-height:14px;letter-spacing:-0.3px;white-space:pre;">6500</div></div>
<div style="left:390px;top:520px;width:69px;height:20px;overflow:hidden;"><div class="t" style="left:4px;top:0.7px;font-size:11px;line-height:14px;letter-spacing:-0.3px;white-space:pre;">H</div></div>
<div style="left:460px;top:520px;width:68px;height:20px;overflow:hidden;"><div class="t" style="left:4px;top:0.7px;font-size:11px;line-height:14px;letter-spacing:-0.3px;white-space:pre;">Magyarország</div></div>
<div style="left:529px;top:520px;width:6px;height:20px;overflow:hidden;"><div class="t" style="left:4px;top:0.7px;font-size:11px;line-height:14px;letter-spacing:-0.3px;white-space:pre;">S</div></div>
<div style="left:37px;top:540px;width:499px;height:20px;background:#add8e6;"></div>
<div style="left:37px;top:540px;width:65px;height:20px;overflow:hidden;"><div class="t" style="left:4px;top:0.7px;font-size:11px;line-height:14px;letter-spacing:-0.3px;white-space:pre;">1016/2</div></div>
<div style="left:103px;top:540px;width:133px;height:20px;overflow:hidden;"><div class="t" style="left:4px;top:0.7px;font-size:11px;line-height:14px;letter-spacing:-0.3px;white-space:pre;">Kovács ABC</div></div>
<div style="left:252px;top:544px;width:12px;height:12px;background:#fff;box-shadow:inset 1px 1px 0 #06063a,inset 2px 2px 0 #6e6aa8,inset -1px -1px 0 #e6e2ff;"><svg width="12" height="12" viewBox="0 0 12 12" style="position:absolute;left:0;top:0"><path d="M2.6 5.2 L5 7.8 L9.5 3.1" stroke="#000" stroke-width="2.1" fill="none"/></svg></div>
<div style="left:279px;top:540px;width:61px;height:20px;overflow:hidden;"><div class="t" style="left:4px;top:0.7px;font-size:11px;line-height:14px;letter-spacing:-0.3px;white-space:pre;">Szentes</div></div>
<div style="left:341px;top:540px;width:48px;height:20px;overflow:hidden;"><div class="t" style="left:4px;top:0.7px;font-size:11px;line-height:14px;letter-spacing:-0.3px;white-space:pre;">6600</div></div>
<div style="left:390px;top:540px;width:69px;height:20px;overflow:hidden;"><div class="t" style="left:4px;top:0.7px;font-size:11px;line-height:14px;letter-spacing:-0.3px;white-space:pre;">H</div></div>
<div style="left:460px;top:540px;width:68px;height:20px;overflow:hidden;"><div class="t" style="left:4px;top:0.7px;font-size:11px;line-height:14px;letter-spacing:-0.3px;white-space:pre;">Magyarország</div></div>
<div style="left:529px;top:540px;width:6px;height:20px;overflow:hidden;"><div class="t" style="left:4px;top:0.7px;font-size:11px;line-height:14px;letter-spacing:-0.3px;white-space:pre;">J</div></div>
<div style="left:102px;top:500px;width:1px;height:40px;background:#eaeaea;"></div>
<div style="left:102px;top:540px;width:1px;height:20px;background:#e4f2f8;"></div>
<div style="left:236px;top:500px;width:1px;height:40px;background:#eaeaea;"></div>
<div style="left:236px;top:540px;width:1px;height:20px;background:#e4f2f8;"></div>
<div style="left:278px;top:500px;width:1px;height:40px;background:#eaeaea;"></div>
<div style="left:278px;top:540px;width:1px;height:20px;background:#e4f2f8;"></div>
<div style="left:340px;top:500px;width:1px;height:40px;background:#eaeaea;"></div>
<div style="left:340px;top:540px;width:1px;height:20px;background:#e4f2f8;"></div>
<div style="left:389px;top:500px;width:1px;height:40px;background:#eaeaea;"></div>
<div style="left:389px;top:540px;width:1px;height:20px;background:#e4f2f8;"></div>
<div style="left:459px;top:500px;width:1px;height:40px;background:#eaeaea;"></div>
<div style="left:459px;top:540px;width:1px;height:20px;background:#e4f2f8;"></div>
<div style="left:528px;top:500px;width:1px;height:40px;background:#eaeaea;"></div>
<div style="left:528px;top:540px;width:1px;height:20px;background:#e4f2f8;"></div>
<div style="left:37px;top:540px;width:66px;height:20px;border:2px solid #111;box-sizing:border-box;border-left-width:1px;"></div>
<div style="left:37px;top:481px;width:66px;height:19px;background:#aca8dc;box-shadow:inset 1px 1px 0 #e6e2ff,inset -1px -1px 0 #06063a,inset -2px -2px 0 #6e6aa866;"></div>
<div class="t" style="top:484.19px;font-size:11px;line-height:14px;letter-spacing:-0.300px;color:#000;white-space:pre;left:42px;">Kód</div>
<div style="left:103px;top:481px;width:134px;height:19px;background:#aca8dc;box-shadow:inset 1px 1px 0 #e6e2ff,inset -1px -1px 0 #06063a,inset -2px -2px 0 #6e6aa866;"></div>
<div class="t" style="top:484.19px;font-size:11px;line-height:14px;letter-spacing:-0.300px;color:#000;white-space:pre;left:108px;">Név</div>
<div style="left:237px;top:481px;width:42px;height:19px;background:#aca8dc;box-shadow:inset 1px 1px 0 #e6e2ff,inset -1px -1px 0 #06063a,inset -2px -2px 0 #6e6aa866;"></div>
<div class="t" style="top:484.19px;font-size:11px;line-height:14px;letter-spacing:-0.300px;color:#000;white-space:pre;left:242px;">Érv.?</div>
<div style="left:279px;top:481px;width:62px;height:19px;background:#aca8dc;box-shadow:inset 1px 1px 0 #e6e2ff,inset -1px -1px 0 #06063a,inset -2px -2px 0 #6e6aa866;"></div>
<div class="t" style="top:484.19px;font-size:11px;line-height:14px;letter-spacing:-0.300px;color:#000;white-space:pre;left:284px;">Település</div>
<div style="left:341px;top:481px;width:49px;height:19px;background:#aca8dc;box-shadow:inset 1px 1px 0 #e6e2ff,inset -1px -1px 0 #06063a,inset -2px -2px 0 #6e6aa866;"></div>
<div class="t" style="top:484.19px;font-size:11px;line-height:14px;letter-spacing:-0.300px;color:#000;white-space:pre;left:346px;">Ir.szám</div>
<div style="left:390px;top:481px;width:70px;height:19px;background:#aca8dc;box-shadow:inset 1px 1px 0 #e6e2ff,inset -1px -1px 0 #06063a,inset -2px -2px 0 #6e6aa866;"></div>
<div class="t" style="top:484.19px;font-size:11px;line-height:14px;letter-spacing:-0.300px;color:#000;white-space:pre;left:395px;">Ország kód</div>
<div style="left:460px;top:481px;width:69px;height:19px;background:#aca8dc;box-shadow:inset 1px 1px 0 #e6e2ff,inset -1px -1px 0 #06063a,inset -2px -2px 0 #6e6aa866;"></div>
<div class="t" style="top:484.19px;font-size:11px;line-height:14px;letter-spacing:-0.300px;color:#000;white-space:pre;left:465px;">Ország név</div>
<div style="left:529px;top:481px;width:7px;height:19px;background:#aca8dc;box-shadow:inset 1px 1px 0 #e6e2ff,inset -1px -1px 0 #06063a,inset -2px -2px 0 #6e6aa866;"></div>
<div style="left:7px;top:481px;width:30px;height:238px;background:#aca8dc;"></div>
<div style="left:7px;top:500px;width:30px;height:20px;background:#aca8dc;box-shadow:inset 1px 1px 0 #e6e2ff,inset -1px -1px 0 #06063a,inset -2px -2px 0 #6e6aa866;"></div>
<div class="t" style="top:504.19px;font-size:11px;line-height:14px;letter-spacing:-0.300px;color:#000;white-space:pre;left:12px;">1</div>
<div style="left:7px;top:520px;width:30px;height:20px;background:#aca8dc;box-shadow:inset 1px 1px 0 #e6e2ff,inset -1px -1px 0 #06063a,inset -2px -2px 0 #6e6aa866;"></div>
<div class="t" style="top:524.19px;font-size:11px;line-height:14px;letter-spacing:-0.300px;color:#000;white-space:pre;left:12px;">2</div>
<div style="left:7px;top:540px;width:30px;height:21px;background:#aca8dc;box-shadow:inset 2px 2px 0 #06063a,inset -1px -1px 0 #e6e2ff;"></div>
<div class="t" style="top:544.02px;font-size:11.5px;line-height:15px;letter-spacing:0.000px;color:#000;white-space:pre;font-weight:bold;left:12px;">3</div>
<div style="left:7px;top:719px;width:529px;height:14px;background:conic-gradient(#fff 25%,#aca8dc 0 50%,#fff 0 75%,#aca8dc 0) 0 0/2px 2px;"></div>
<div style="left:7px;top:719px;width:15px;height:14px;background:#aca8dc;box-shadow:inset 1px 1px 0 #e6e2ff,inset -1px -1px 0 #06063a,inset -2px -2px 0 #6e6aa866;"></div>
<svg style="left:0;top:0" width="1024" height="768" class="ov"><polygon points="15.5,723 15.5,729 12.5,726" fill="#000"/></svg>
<div style="left:521px;top:719px;width:15px;height:14px;background:#aca8dc;box-shadow:inset 1px 1px 0 #e6e2ff,inset -1px -1px 0 #06063a,inset -2px -2px 0 #6e6aa866;"></div>
<svg style="left:0;top:0" width="1024" height="768" class="ov"><polygon points="527.5,723 527.5,729 530.5,726" fill="#000"/></svg>
<div style="left:22px;top:719px;width:415px;height:14px;background:#aca8dc;box-shadow:inset 1px 1px 0 #e6e2ff,inset -1px -1px 0 #06063a,inset -2px -2px 0 #6e6aa866;"></div>
<div style="left:538px;top:479px;width:1px;height:255px;background:#e6e2ff;"></div>
<div style="left:541px;top:479px;width:2px;height:255px;background:#06063a;"></div>
<div style="left:544px;top:502px;width:469px;height:232px;background:#aca8dc;box-shadow:inset 1px 0 0 #e6e2ff,inset -1px -1px 0 #06063a,inset -2px -2px 0 #6e6aa855;"></div>
<div style="left:544px;top:502px;width:469px;height:1px;background:#e6e2ff;"></div>
<div style="left:544px;top:479px;width:152px;height:25px;background:#aca8dc;box-shadow:inset 1px 1px 0 #e6e2ff,inset -2px 0 0 #06063a;border-radius:2px 2px 0 0;"></div>
<div class="t" style="top:483.69px;font-size:11px;line-height:14px;letter-spacing:-0.218px;color:#000;white-space:pre;left:553.4px;">Cím vállalatfüggő jellemzők</div>
<div style="left:696px;top:481px;width:87px;height:20px;background:#aca8dc;box-shadow:inset 1px 1px 0 #e6e2ff,inset -2px 0 0 #06063a;border-radius:2px 2px 0 0;"></div>
<div style="left:696px;top:481px;width:87px;height:20px;overflow:hidden;"><div class="t" style="left:6.2000000000000455px;top:2.69px;font-size:11px;line-height:14px;letter-spacing:-0.277px;white-space:pre;">Kereskedelem</div></div>
<div style="left:784px;top:481px;width:120px;height:20px;background:#aca8dc;box-shadow:inset 1px 1px 0 #e6e2ff,inset -2px 0 0 #06063a;border-radius:2px 2px 0 0;"></div>
<div style="left:784px;top:481px;width:120px;height:20px;overflow:hidden;"><div class="t" style="left:6.100000000000023px;top:2.69px;font-size:11px;line-height:14px;letter-spacing:-0.179px;white-space:pre;">Készültségek, járatok</div></div>
<div style="left:905px;top:481px;width:66px;height:20px;background:#aca8dc;box-shadow:inset 1px 1px 0 #e6e2ff,inset -2px 0 0 #06063a;border-radius:2px 2px 0 0;"></div>
<div style="left:905px;top:481px;width:66px;height:20px;overflow:hidden;"><div class="t" style="left:7.5px;top:2.69px;font-size:11px;line-height:14px;letter-spacing:-0.358px;white-space:pre;">Besorolás</div></div>
<div style="left:972px;top:481px;width:9px;height:20px;background:#aca8dc;box-shadow:inset 1px 1px 0 #e6e2ff;border-radius:2px 2px 0 0;"></div>
<div style="left:972px;top:481px;width:9px;height:20px;overflow:hidden;"><div class="t" style="left:7px;top:2.69px;font-size:11px;line-height:14px;letter-spacing:-0.241px;white-space:pre;">Egyéb</div></div>
<div style="left:981px;top:480px;width:16px;height:23px;background:#aca8dc;box-shadow:inset 1px 1px 0 #e6e2ff,inset -1px -1px 0 #06063a,inset -2px -2px 0 #6e6aa866;"></div>
<div style="left:997px;top:480px;width:15px;height:23px;background:#aca8dc;box-shadow:inset 1px 1px 0 #e6e2ff,inset -1px -1px 0 #06063a,inset -2px -2px 0 #6e6aa866;"></div>
<svg style="left:0;top:0" width="1024" height="768" class="ov"><polygon points="990.75,488.0 990.75,495.0 987.25,491.5" fill="#8a86b8"/></svg>
<svg style="left:0;top:0" width="1024" height="768" class="ov"><polygon points="1003.25,488.0 1003.25,495.0 1006.75,491.5" fill="#000"/></svg>
<div class="t" style="top:517.19px;font-size:11px;line-height:14px;letter-spacing:-0.364px;color:#000;white-space:pre;left:556.2px;">Paritás</div>
<div style="left:664px;top:514px;width:134px;height:20px;background:#add8e6;box-shadow:inset -1px -1px 0 #e6e2ff,inset 2px 2px 0 #06063a;"></div>
<div style="left:799px;top:514px;width:201px;height:20px;background:#add8e6;box-shadow:inset -1px -1px 0 #e6e2ff,inset 2px 2px 0 #06063a;"></div>
<div class="t" style="top:542.19px;font-size:11px;line-height:14px;letter-spacing:-0.334px;color:#000;white-space:pre;left:556.2px;">Járat</div>
<div style="left:664px;top:539px;width:89px;height:20px;background:#add8e6;box-shadow:inset -1px -1px 0 #e6e2ff,inset 2px 2px 0 #06063a;"></div>
<div style="left:753px;top:537px;width:39px;height:24px;background:#aca8dc;box-shadow:inset 1px 1px 0 #e6e2ff,inset -1px -1px 0 #06063a,inset -2px -2px 0 #6e6aa866;"></div>
<div class="t" style="top:542.19px;font-size:11px;line-height:14px;letter-spacing:0.328px;color:#000;white-space:pre;left:764.9px;">V.?</div>
<div class="t" style="top:542.19px;font-size:11px;line-height:14px;letter-spacing:-0.232px;color:#000;white-space:pre;left:793.7px;">Rakodási sorrend</div>
<div style="left:876px;top:539px;width:124px;height:20px;background:#add8e6;box-shadow:inset -1px -1px 0 #e6e2ff,inset 2px 2px 0 #06063a;"></div>
<div class="t" style="top:566.19px;font-size:11px;line-height:14px;letter-spacing:-0.128px;color:#000;white-space:pre;left:556.2px;">Szállítási cím?</div>
<div style="left:664.5px;top:567px;width:12px;height:12px;background:#add8e6;box-shadow:inset 1px 1px 0 #06063a,inset 2px 2px 0 #6e6aa8,inset -1px -1px 0 #e6e2ff;"><svg width="12" height="12" viewBox="0 0 12 12" style="position:absolute;left:0;top:0"><path d="M2.6 5.2 L5 7.8 L9.5 3.1" stroke="#000" stroke-width="2.1" fill="none"/></svg></div>
<div class="t" style="top:566.19px;font-size:11px;line-height:14px;letter-spacing:-0.075px;color:#000;white-space:pre;left:741.4px;">Szállító cím?</div>
<div style="left:809px;top:567px;width:12px;height:12px;background:#add8e6;box-shadow:inset 1px 1px 0 #06063a,inset 2px 2px 0 #6e6aa8,inset -1px -1px 0 #e6e2ff;"></div>
<div class="t" style="top:566.19px;font-size:11px;line-height:14px;letter-spacing:-0.171px;color:#000;white-space:pre;left:885.3px;">Élőállat szállító cím?</div>
<div style="left:988px;top:567px;width:12px;height:12px;background:#add8e6;box-shadow:inset 1px 1px 0 #06063a,inset 2px 2px 0 #6e6aa8,inset -1px -1px 0 #e6e2ff;"></div>
<div class="t" style="top:589.19px;font-size:11px;line-height:14px;letter-spacing:-0.035px;color:#000;white-space:pre;left:556.2px;">Ügynök/kirendeltség</div>
<div style="left:664px;top:586px;width:134px;height:20px;background:#add8e6;box-shadow:inset -1px -1px 0 #e6e2ff,inset 2px 2px 0 #06063a;"></div>
<div style="left:799px;top:586px;width:201px;height:20px;background:#add8e6;box-shadow:inset -1px -1px 0 #e6e2ff,inset 2px 2px 0 #06063a;"></div>
<div class="t" style="top:612.19px;font-size:11px;line-height:14px;letter-spacing:-0.106px;color:#000;white-space:pre;left:556.2px;">Beszállító kód</div>
<div style="left:664px;top:609px;width:128px;height:20px;background:#add8e6;box-shadow:inset -1px -1px 0 #e6e2ff,inset 2px 2px 0 #06063a;"></div>
<div class="t" style="top:612.19px;font-size:11px;line-height:14px;letter-spacing:-0.150px;color:#000;white-space:pre;left:793.7px;">Hivatkozás</div>
<div style="left:876px;top:609px;width:124px;height:20px;background:#add8e6;box-shadow:inset -1px -1px 0 #e6e2ff,inset 2px 2px 0 #06063a;"></div>
<div class="t" style="top:635.19px;font-size:11px;line-height:14px;letter-spacing:-0.313px;color:#000;white-space:pre;left:556.2px;">Vállalat megjegyzés</div>
<div style="left:664px;top:632px;width:336px;height:20px;background:#add8e6;box-shadow:inset -1px -1px 0 #e6e2ff,inset 2px 2px 0 #06063a;"></div>
<div class="t" style="top:657.19px;font-size:11px;line-height:14px;letter-spacing:0.004px;color:#000;white-space:pre;left:556.2px;">Ean kód</div>
<div style="left:664px;top:654px;width:128px;height:20px;background:#add8e6;box-shadow:inset -1px -1px 0 #e6e2ff,inset 2px 2px 0 #06063a;"></div>
<div class="t" style="top:657.19px;font-size:11px;line-height:14px;letter-spacing:-0.301px;color:#000;white-space:pre;left:793.7px;">Raktár számláz?</div>
<div style="left:932px;top:658px;width:12px;height:12px;background:#add8e6;box-shadow:inset 1px 1px 0 #06063a,inset 2px 2px 0 #6e6aa8,inset -1px -1px 0 #e6e2ff;"></div>
<div class="t" style="top:680.19px;font-size:11px;line-height:14px;letter-spacing:-0.136px;color:#000;white-space:pre;left:556.2px;">Élőállat átvétel ár típus</div>
<div style="left:664px;top:677px;width:336px;height:20px;background:#add8e6;box-shadow:inset -1px -1px 0 #e6e2ff,inset 2px 2px 0 #06063a;"></div>
<div style="left:983px;top:679px;width:15px;height:16px;background:#aca8dc;box-shadow:inset 1px 1px 0 #e6e2ff,inset -1px -1px 0 #06063a,inset -2px -2px 0 #6e6aa866;"></div>
<svg style="left:0;top:0" width="1024" height="768" class="ov"><polygon points="987.0,685.75 994.0,685.75 990.5,689.25" fill="#000"/></svg>
<div style="left:4px;top:741px;width:42px;height:16px;background:#aca8dc;box-shadow:inset 1px 1px 0 #6e6aa8,inset -1px -1px 0 #e6e2ff;"></div>
<div class="t" style="top:741.99px;font-size:11px;line-height:14px;letter-spacing:-0.060px;color:#000;white-space:pre;left:5.8px;">-v1.72X</div>
<div style="left:47px;top:741px;width:102px;height:16px;background:#aca8dc;box-shadow:inset 1px 1px 0 #6e6aa8,inset -1px -1px 0 #e6e2ff;"></div>
<div class="t" style="top:741.99px;font-size:11px;line-height:14px;letter-spacing:0.300px;color:#000;white-space:pre;left:48.75px;">3 / 3</div>
<div style="left:151px;top:741px;width:20px;height:16px;background:#aca8dc;box-shadow:inset 1px 1px 0 #6e6aa8,inset -1px -1px 0 #e6e2ff;"></div>
<div style="left:153.5px;top:742.5px;width:12px;height:12px;background:#fff;border-radius:50%;box-shadow:inset 1.5px 1.5px 1px #223;"></div>
<div style="left:172px;top:741px;width:839px;height:16px;background:#aca8dc;box-shadow:inset 1px 1px 0 #6e6aa8,inset -1px -1px 0 #e6e2ff;"></div>
<div class="t" style="top:742.19px;font-size:11px;line-height:14px;letter-spacing:-0.038px;color:#000;white-space:pre;left:173.5px;">(*)A cím partneren belül egyedi kódja</div>
<div style="left:0px;top:758px;width:1019px;height:2px;background:#06063a;"></div>
<div style="left:1014px;top:101px;width:1px;height:658px;background:#e6e2ff;opacity:.4;"></div>
<div style="left:1017px;top:100px;width:2px;height:660px;background:#06063a;"></div>
<div style="left:1018px;top:78px;width:1px;height:22px;background:#6e6aa8;"></div>
<div style="left:1019px;top:78px;width:3px;height:683px;background:#e6e2ff;opacity:.5;"></div>
<div style="left:1023px;top:78px;width:1px;height:683px;background:#06063a;"></div>
<div style="left:0px;top:762px;width:1024px;height:1px;background:#e6e2ff;opacity:.35;"></div>
</body></html>
